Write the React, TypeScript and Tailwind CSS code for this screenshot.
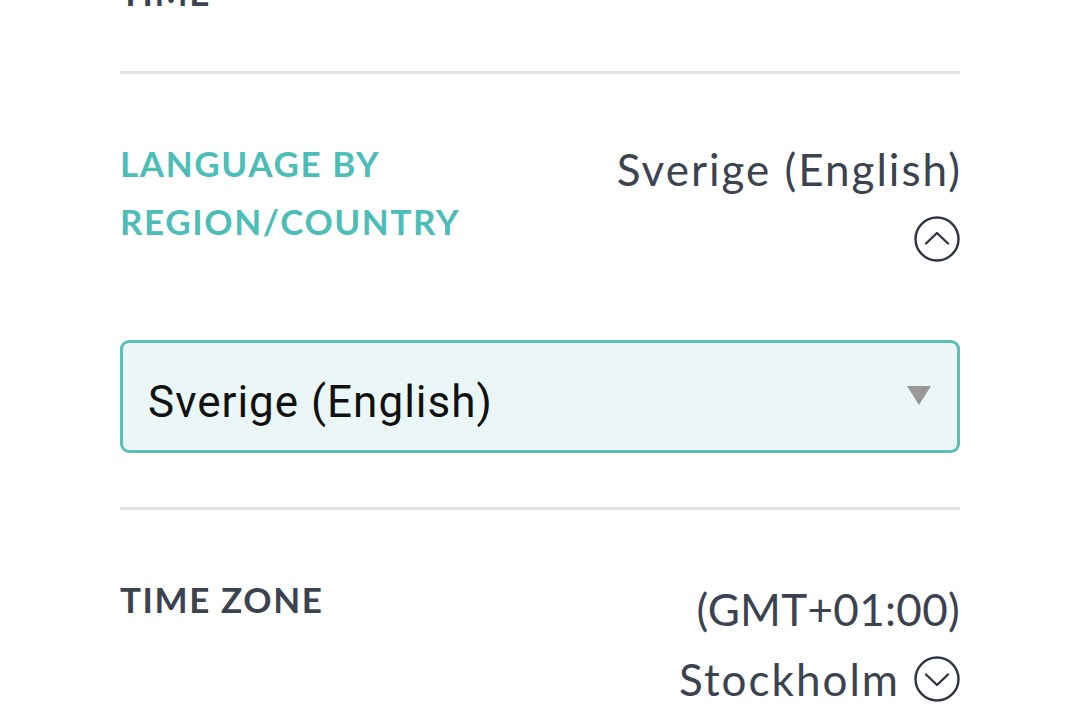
import React from "react";

function CircleChevron({ up }: { up?: boolean }) {
  return (
    <svg width="46" height="46" viewBox="0 0 46 46" fill="none" className="block">
      <circle cx="23" cy="23" r="21.5" stroke="#2f3541" strokeWidth="2.4" />
      {up ? (
        <path d="M12 27.5 L23 17 L34 27.5" stroke="#2f3541" strokeWidth="2.4" strokeLinecap="round" strokeLinejoin="round" />
      ) : (
        <path d="M12 18.5 L23 29 L34 18.5" stroke="#2f3541" strokeWidth="2.4" strokeLinecap="round" strokeLinejoin="round" />
      )}
    </svg>
  );
}

export default function App() {
  const label = "text-[35px] leading-[58px] font-bold tracking-[1.6px]";
  const value = "text-[44px] leading-[70px] text-[#3b4351]";
  return (
    <div className="w-[1080px] h-[720px] overflow-hidden bg-white" style={{ fontFamily: "Lato, 'Open Sans', sans-serif" }}>
      <div className="mx-auto w-[840px]">
        <div className={`${label} mt-[-37px] text-[#3b4351]`}>TIME</div>
        <div className="mt-[50px] h-[3px] bg-[#e1e4e7]" />

        <div className="pt-[60px] flex justify-between items-start">
          <div className={`${label} text-[#4dbdb8]`}>
            <div>LANGUAGE BY</div>
            <div>REGION/COUNTRY</div>
          </div>
          <div className={`${value} flex flex-col items-end`}>
            <div className="tracking-[2px] -mr-[2px]">Sverige (English)</div>
            <div className="h-[70px] flex items-center">
              <CircleChevron up />
            </div>
          </div>
        </div>

        <div className="mt-[66px] h-[113px] rounded-[9px] border-[3px] border-[#5cbdb9] bg-[#ebf7f7] flex items-center justify-between pl-[25px] pr-[26px]">
          <span className="text-[44px] tracking-[1px] text-[#111] pt-[10px]" style={{ fontFamily: "Roboto, 'Noto Sans', sans-serif" }}>
            Sverige (English)
          </span>
          <svg width="24" height="19" viewBox="0 0 24 19" className="block -mt-[2px]">
            <path d="M0 0 H24 L12 19 Z" fill="#999" />
          </svg>
        </div>

        <div className="mt-[54px] h-[3px] bg-[#e1e4e7]" />

        <div className="pt-[60px] flex justify-between items-start">
          <div className={`${label} text-[#3b4351]`}>TIME ZONE</div>
          <div className={`${value} flex flex-col items-end mt-[4px]`}>
            <div className="tracking-[0.3px]">(GMT+01:00)</div>
            <div className="flex items-center gap-[14px]">
              <span className="tracking-[2px]">Stockholm</span>
              <CircleChevron />
            </div>
          </div>
        </div>
      </div>
    </div>
  );
}
